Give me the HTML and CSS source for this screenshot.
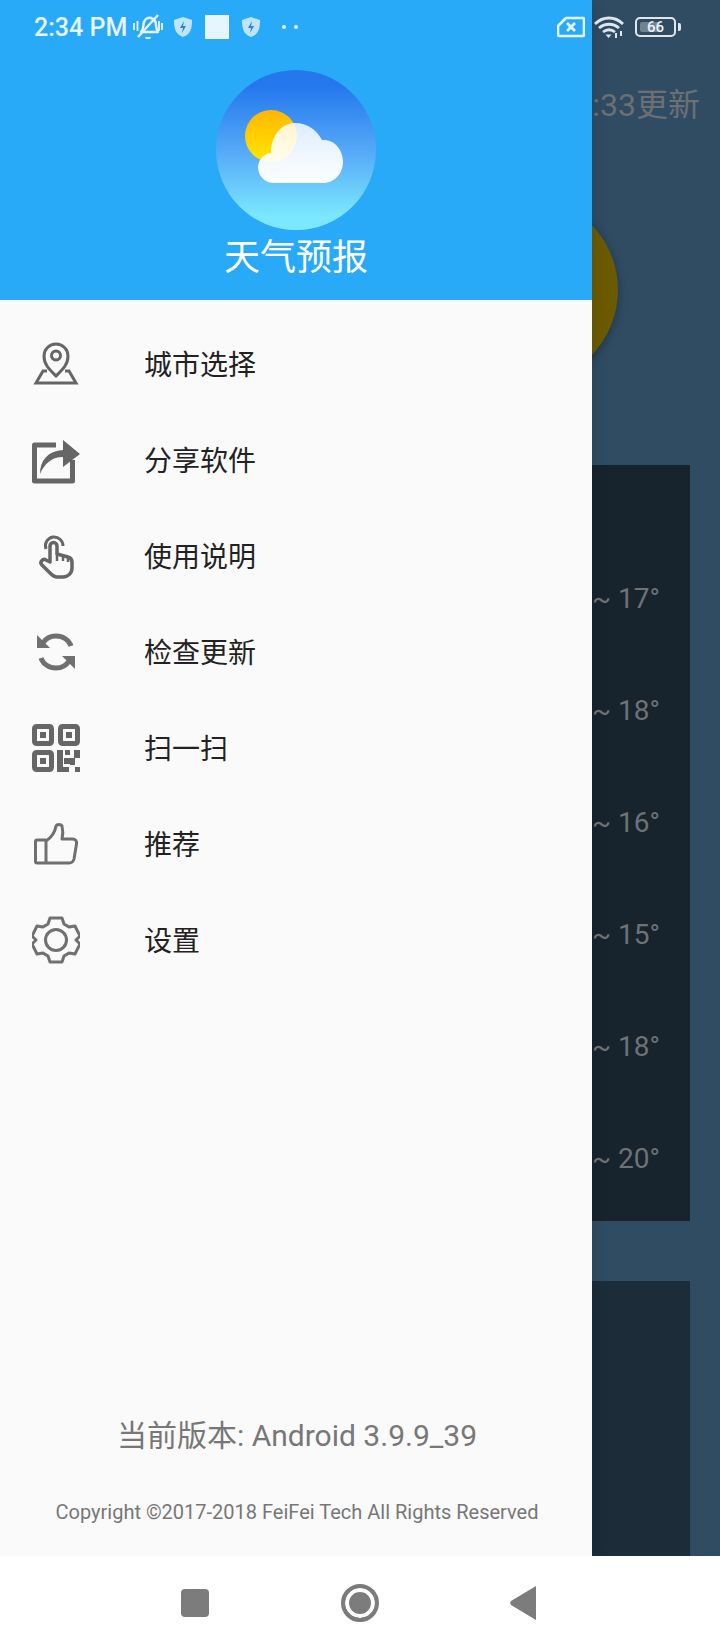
FILE: index.html
```html
<!DOCTYPE html>
<html lang="zh-CN">
<head>
    <meta charset="UTF-8">
    <meta name="viewport" content="width=device-width, initial-scale=1.0">
    <title>天气预报</title>
    <link rel="stylesheet" href="styles.css">
</head>
<body>

    <div class="screen">
        <div class="main">

            <!-- weather page behind the drawer -->
            <div class="app">
                <div class="updated">07:33更新</div>
                <div class="disk"></div>
                <div class="panel panel-days">
                    <div class="day">12° ~ 17°</div>
                    <div class="day">12° ~ 18°</div>
                    <div class="day">11° ~ 16°</div>
                    <div class="day">10° ~ 15°</div>
                    <div class="day">11° ~ 18°</div>
                    <div class="day">13° ~ 20°</div>
                </div>
                <div class="panel panel-more"></div>
            </div>

            <div class="drawer">
                <div class="drawer-head">
                    <svg class="logo" viewBox="0 0 160 160">
                        <defs>
                            <linearGradient id="sky" x1="0" y1="0" x2="0" y2="1">
                                <stop offset="0.1" stop-color="#2478ec"/>
                                <stop offset="0.5" stop-color="#55a8f8"/>
                                <stop offset="0.92" stop-color="#7ce8ff"/>
                            </linearGradient>
                            <linearGradient id="sun" x1="0" y1="0" x2="0" y2="1">
                                <stop offset="0" stop-color="#ffb700"/>
                                <stop offset="1" stop-color="#ffe600"/>
                            </linearGradient>
                            <linearGradient id="cloud" x1="0" y1="0" x2="0" y2="1">
                                <stop offset="0" stop-color="#fff" stop-opacity="0.82"/>
                                <stop offset="1" stop-color="#fff" stop-opacity="0.98"/>
                            </linearGradient>
                        </defs>
                        <circle cx="80" cy="80" r="80" fill="url(#sky)"/>
                        <circle cx="55" cy="66" r="26" fill="url(#sun)"/>
                        <path d="M58 113a16 16 0 0 1-16-15c0-8 5-14 13-15C55 65 66 53 79 53c12 0 22 7 27 17 12-1 21 9 21 22 0 12-9 21-20 21z" fill="url(#cloud)"/>
                    </svg>
                    <div class="app-name">天气预报</div>
                </div>

                <div class="menu">
                    <div class="menu-item">
                        <svg class="menu-icon" viewBox="0 0 48 48">
                            <path d="M24 36C18 30 12 25 12 16a12 12 0 0 1 24 0C36 25 30 30 24 36z" fill="none" stroke="#666" stroke-width="3"/>
                            <circle cx="24" cy="15.500" r="4.500" fill="none" stroke="#666" stroke-width="3"/>
                            <path d="M15 31h-4L4 43h40l-7-12h-4" fill="none" stroke="#666" stroke-width="3"/>
                        </svg>
                        <span>城市选择</span>
                    </div>
                    <div class="menu-item">
                        <svg class="menu-icon" viewBox="0 0 48 48">
                            <path d="M24 9H2.500v36h38V24" fill="none" stroke="#666" stroke-width="5" stroke-linejoin="round"/>
                            <path d="M8 38C8 24 16 15 31 14V4l17 14-17 13V21C20 21 13 27 8 38z" fill="#666"/>
                        </svg>
                        <span>分享软件</span>
                    </div>
                    <div class="menu-item">
                        <svg class="menu-icon" viewBox="0 0 48 48">
                            <path d="M14 17a9 9 0 0 1 7-12 9 9 0 0 1 10 9" fill="none" stroke="#666" stroke-width="3"/>
                            <path d="M18 30V14a3.500 3.500 0 0 1 7 0v8l11 3c3 1 4 3 4 5v6c0 5-4 9-9 9h-6c-3 0-5-2-7-4l-8-8c-3-3 1-7 4-5z" fill="none" stroke="#666" stroke-width="3.500" stroke-linejoin="round"/>
                            <path d="M25 22v7M31 23v6M36 25v5" fill="none" stroke="#666" stroke-width="2.500"/>
                        </svg>
                        <span>使用说明</span>
                    </div>
                    <div class="menu-item">
                        <svg class="menu-icon" viewBox="0 0 48 48">
                            <path d="M11 15C14 10 19 8 24 8c7 0 13 4 15 10" fill="none" stroke="#707070" stroke-width="5"/>
                            <path d="M37 33c-3 5-8 7-13 7-7 0-13-4-15-10" fill="none" stroke="#707070" stroke-width="5"/>
                            <path d="M5 7v13h13z" fill="#707070"/>
                            <path d="M43 41V28H30z" fill="#707070"/>
                        </svg>
                        <span>检查更新</span>
                    </div>
                    <div class="menu-item">
                        <svg class="menu-icon" viewBox="0 0 48 48">
                            <g fill="none" stroke="#666" stroke-width="5">
                                <rect x="2.500" y="2.500" width="17" height="17" rx="2"/>
                                <rect x="28.500" y="2.500" width="17" height="17" rx="2"/>
                                <rect x="2.500" y="28.500" width="17" height="17" rx="2"/>
                            </g>
                            <g fill="#666">
                                <rect x="8" y="8" width="6" height="6"/>
                                <rect x="34" y="8" width="6" height="6"/>
                                <rect x="8" y="34" width="6" height="6"/>
                                <path d="M25 26h6v17h6v5H25z"/>
                                <rect x="33" y="26" width="5" height="5"/>
                                <rect x="32" y="34" width="6" height="6"/>
                                <path d="M42 26h6v8h-5v7h-5v-7h4z"/>
                                <rect x="43" y="43" width="5" height="5"/>
                            </g>
                        </svg>
                        <span>扫一扫</span>
                    </div>
                    <div class="menu-item">
                        <svg class="menu-icon" viewBox="0 0 48 48">
                            <path d="M14 20H5c-1 0-1.500 1-1.500 1.500v20c0 1 .5 1.500 1.500 1.500h32c3 0 4.500-2 5-4l2.500-15c.5-3-1-5-4-5H30c1-4 1-9 0-13-1-2-5-2-6 0-1 6-4 11-10 15v21" fill="none" stroke="#707070" stroke-width="3" stroke-linejoin="round"/>
                        </svg>
                        <span>推荐</span>
                    </div>
                    <div class="menu-item">
                        <svg class="menu-icon" viewBox="0 0 48 48">
                            <path d="M18 2h12l2 6 5 3 6-1 5 10-4 4 4 4-5 10-6-1-5 3-2 6H18l-2-6-5-3-6 1-5-10 4-4-4-4 5-10 6 1 5-3z" fill="none" stroke="#707070" stroke-width="3" stroke-linejoin="round"/>
                            <circle cx="24" cy="24" r="10.500" fill="none" stroke="#707070" stroke-width="3"/>
                        </svg>
                        <span>设置</span>
                    </div>
                </div>

                <div class="drawer-foot">
                    <div class="version">当前版本: Android 3.9.9_39</div>
                    <div class="copyright">Copyright ©2017-2018 FeiFei Tech All Rights Reserved</div>
                </div>
            </div>

            <div class="statusbar">
                <span class="clock">2:34 PM</span>
                <svg class="st-bell" viewBox="0 0 30 28">
                    <path d="M8 19c3-3 2-7 3-10 1-3 4-5 7-4 3 1 5 3 5 7 0 3 1 5 2 7z" fill="none" stroke="#e6f5ff" stroke-width="2.400" stroke-linejoin="round"/>
                    <path d="M5 24L25 2" stroke="#e6f5ff" stroke-width="2.400"/>
                    <path d="M12 24h6l-1 2h-4z" fill="#e6f5ff"/>
                    <path d="M1 10v7M4.500 8v10M26 8v10M29 10v7" stroke="#e6f5ff" stroke-width="1.800"/>
                </svg>
                <svg class="st-shield" viewBox="0 0 20 22">
                    <path d="M10 1l9 3c0 8-1 14-9 17C2 18 1 12 1 4z" fill="#bfe4fd"/>
                    <path d="M11 5l-4 7h3l-1 5 4-7h-3z" fill="#2a86c9"/>
                </svg>
                <span class="st-square"></span>
                <svg class="st-shield" viewBox="0 0 20 22">
                    <path d="M10 1l9 3c0 8-1 14-9 17C2 18 1 12 1 4z" fill="#bfe4fd"/>
                    <path d="M11 5l-4 7h3l-1 5 4-7h-3z" fill="#2a86c9"/>
                </svg>
                <span class="st-dots"><i></i><i></i></span>

                <span class="st-right">
                    <svg class="st-sim" viewBox="0 0 28 22">
                        <path d="M9 2h17c.5 0 1 .5 1 1v16c0 .5-.5 1-1 1H2c-.5 0-1-.5-1-1V10z" fill="none" stroke="#e6f5ff" stroke-width="2.600" stroke-linejoin="round"/>
                        <path d="M10 7l8 8M18 7l-8 8" stroke="#e6f5ff" stroke-width="2.800"/>
                    </svg>
                    <svg class="st-wifi" viewBox="0 0 30 24">
                        <path d="M1 9c8-8 20-8 28 0" fill="none" stroke="#dfe6ec" stroke-width="2.800"/>
                        <path d="M5 13c6-5 14-5 20 0" fill="none" stroke="#dfe6ec" stroke-width="2.800"/>
                        <path d="M9 17c4-3 8-3 12 0" fill="none" stroke="#dfe6ec" stroke-width="2.800"/>
                        <path d="M11.500 19.500h6L14.500 23z" fill="#dfe6ec"/>
                        <path d="M22 18v5M27 16v5" stroke="#dfe6ec" stroke-width="2"/>
                    </svg>
                    <span class="st-battery"><span class="st-level"></span><span class="st-pct">66</span></span>
                    <span class="st-nub"></span>
                </span>
            </div>
        </div>

        <div class="navbar">
            <span class="nav-square"></span>
            <span class="nav-home"></span>
            <svg class="nav-back" viewBox="0 0 26 34">
                <path d="M26 0v34L1 19c-1-1-1-3 0-4z" fill="#7c7c7c"/>
            </svg>
        </div>
    </div>

</body>
</html>
```

FILE: styles.css
```css
* {
    box-sizing: border-box;
}

body {
    margin: 0;
    font-family: Roboto, "Noto Sans CJK SC", sans-serif;
}

.screen {
    width: 720px;
    height: 1650px;
    display: flex;
    flex-direction: column;
    overflow: hidden;
    background-color: #fff;
}

.main {
    position: relative;
    height: 1556px;
    overflow: hidden;
}

/* page behind */
.app {
    height: 100%;
    background-color: #2f4c63;
    padding-top: 83px;
    overflow: hidden;
}

.updated {
    height: 44px;
    padding-right: 20px;
    text-align: right;
    font-size: 32px;
    line-height: 44px;
    color: #6d7073;
}

.disk {
    width: 188px;
    height: 188px;
    margin: 69px 0 0 430px;
    border-radius: 50%;
    background-color: #6b5a00;
    box-shadow: 0 3px 10px rgba(0, 0, 0, 0.3);
}

.panel {
    margin: 0 30px;
}

.panel-days {
    height: 756px;
    margin-top: 81px;
    padding-top: 78px;
    background-color: #17242d;
}

.panel-more {
    height: 300px;
    margin-top: 60px;
    background-color: #1c2c39;
}

.day {
    height: 112px;
    padding-right: 30px;
    text-align: right;
    font-size: 28px;
    line-height: 112px;
    color: #6f7275;
}

/* drawer */
.drawer {
    position: absolute;
    top: 0;
    left: 0;
    width: 592px;
    height: 100%;
    display: flex;
    flex-direction: column;
    background-color: #fafafa;
    box-shadow: 0 0 16px rgba(0, 0, 0, 0.12);
}

.drawer-head {
    height: 300px;
    padding-top: 70px;
    display: flex;
    flex-direction: column;
    align-items: center;
    background-color: #29aaf8;
}

.logo {
    width: 160px;
    height: 160px;
    flex: none;
}

.app-name {
    font-size: 36px;
    line-height: 56px;
    color: #fff;
}

.menu {
    flex: 1;
    padding-top: 16px;
}

.menu-item {
    height: 96px;
    padding-left: 32px;
    display: flex;
    align-items: center;
    gap: 64px;
    font-size: 28px;
    color: #222;
}

.menu-item span {
    margin-bottom: 3px;
}

.menu-icon {
    width: 48px;
    height: 48px;
    flex: none;
}

.drawer-foot {
    height: 142px;
    padding-left: 2px;
    text-align: center;
    color: #777;
}

.version {
    height: 44px;
    font-size: 30px;
    line-height: 44px;
}

.copyright {
    margin-top: 40px;
    font-size: 20px;
    line-height: 28px;
}

/* status bar over everything */
.statusbar {
    position: absolute;
    top: 0;
    left: 0;
    right: 0;
    height: 54px;
    padding: 0 39px 0 34px;
    display: flex;
    align-items: center;
    color: #e6f5ff;
}

.clock {
    font-size: 25px;
    font-weight: 500;
    margin-right: 6px;
}

.st-bell {
    width: 30px;
    height: 28px;
    margin-right: 10px;
}

.st-shield {
    width: 20px;
    height: 22px;
}

.st-square {
    width: 24px;
    height: 24px;
    margin: 0 12px;
    background-color: #e6f5ff;
}

.st-dots {
    display: flex;
    gap: 8px;
    margin-left: 21px;
}

.st-dots i {
    width: 4px;
    height: 4px;
    border-radius: 50%;
    background-color: #e6f5ff;
}

.st-right {
    margin-left: auto;
    display: flex;
    align-items: center;
}

.st-sim {
    width: 28px;
    height: 22px;
    margin-right: 9px;
}

.st-wifi {
    width: 30px;
    height: 24px;
    margin-right: 11px;
}

.st-battery {
    position: relative;
    width: 41px;
    height: 20px;
    border: 2px solid #dfe6ec;
    border-radius: 5px;
    display: flex;
    align-items: center;
    justify-content: center;
}

.st-level {
    position: absolute;
    top: 3px;
    bottom: 3px;
    left: 3px;
    width: 20px;
    border-radius: 2px;
    background-color: #6f8394;
}

.st-pct {
    position: relative;
    font-size: 15px;
    font-weight: 500;
    color: #eef2f5;
}

.st-nub {
    width: 3px;
    height: 8px;
    margin-left: 2px;
    border-radius: 0 2px 2px 0;
    background-color: #dfe6ec;
}

/* bottom nav */
.navbar {
    flex: 1;
    padding-left: 181px;
    display: flex;
    align-items: center;
    background-color: #fff;
}

.nav-square {
    width: 28px;
    height: 28px;
    border-radius: 4px;
    background-color: #7c7c7c;
}

.nav-home {
    width: 38px;
    height: 38px;
    margin-left: 132px;
    border: 4px solid #7c7c7c;
    border-radius: 50%;
    background-color: #7c7c7c;
    box-shadow: inset 0 0 0 4px #fff;
}

.nav-back {
    width: 26px;
    height: 34px;
    margin-left: 131px;
}
```
